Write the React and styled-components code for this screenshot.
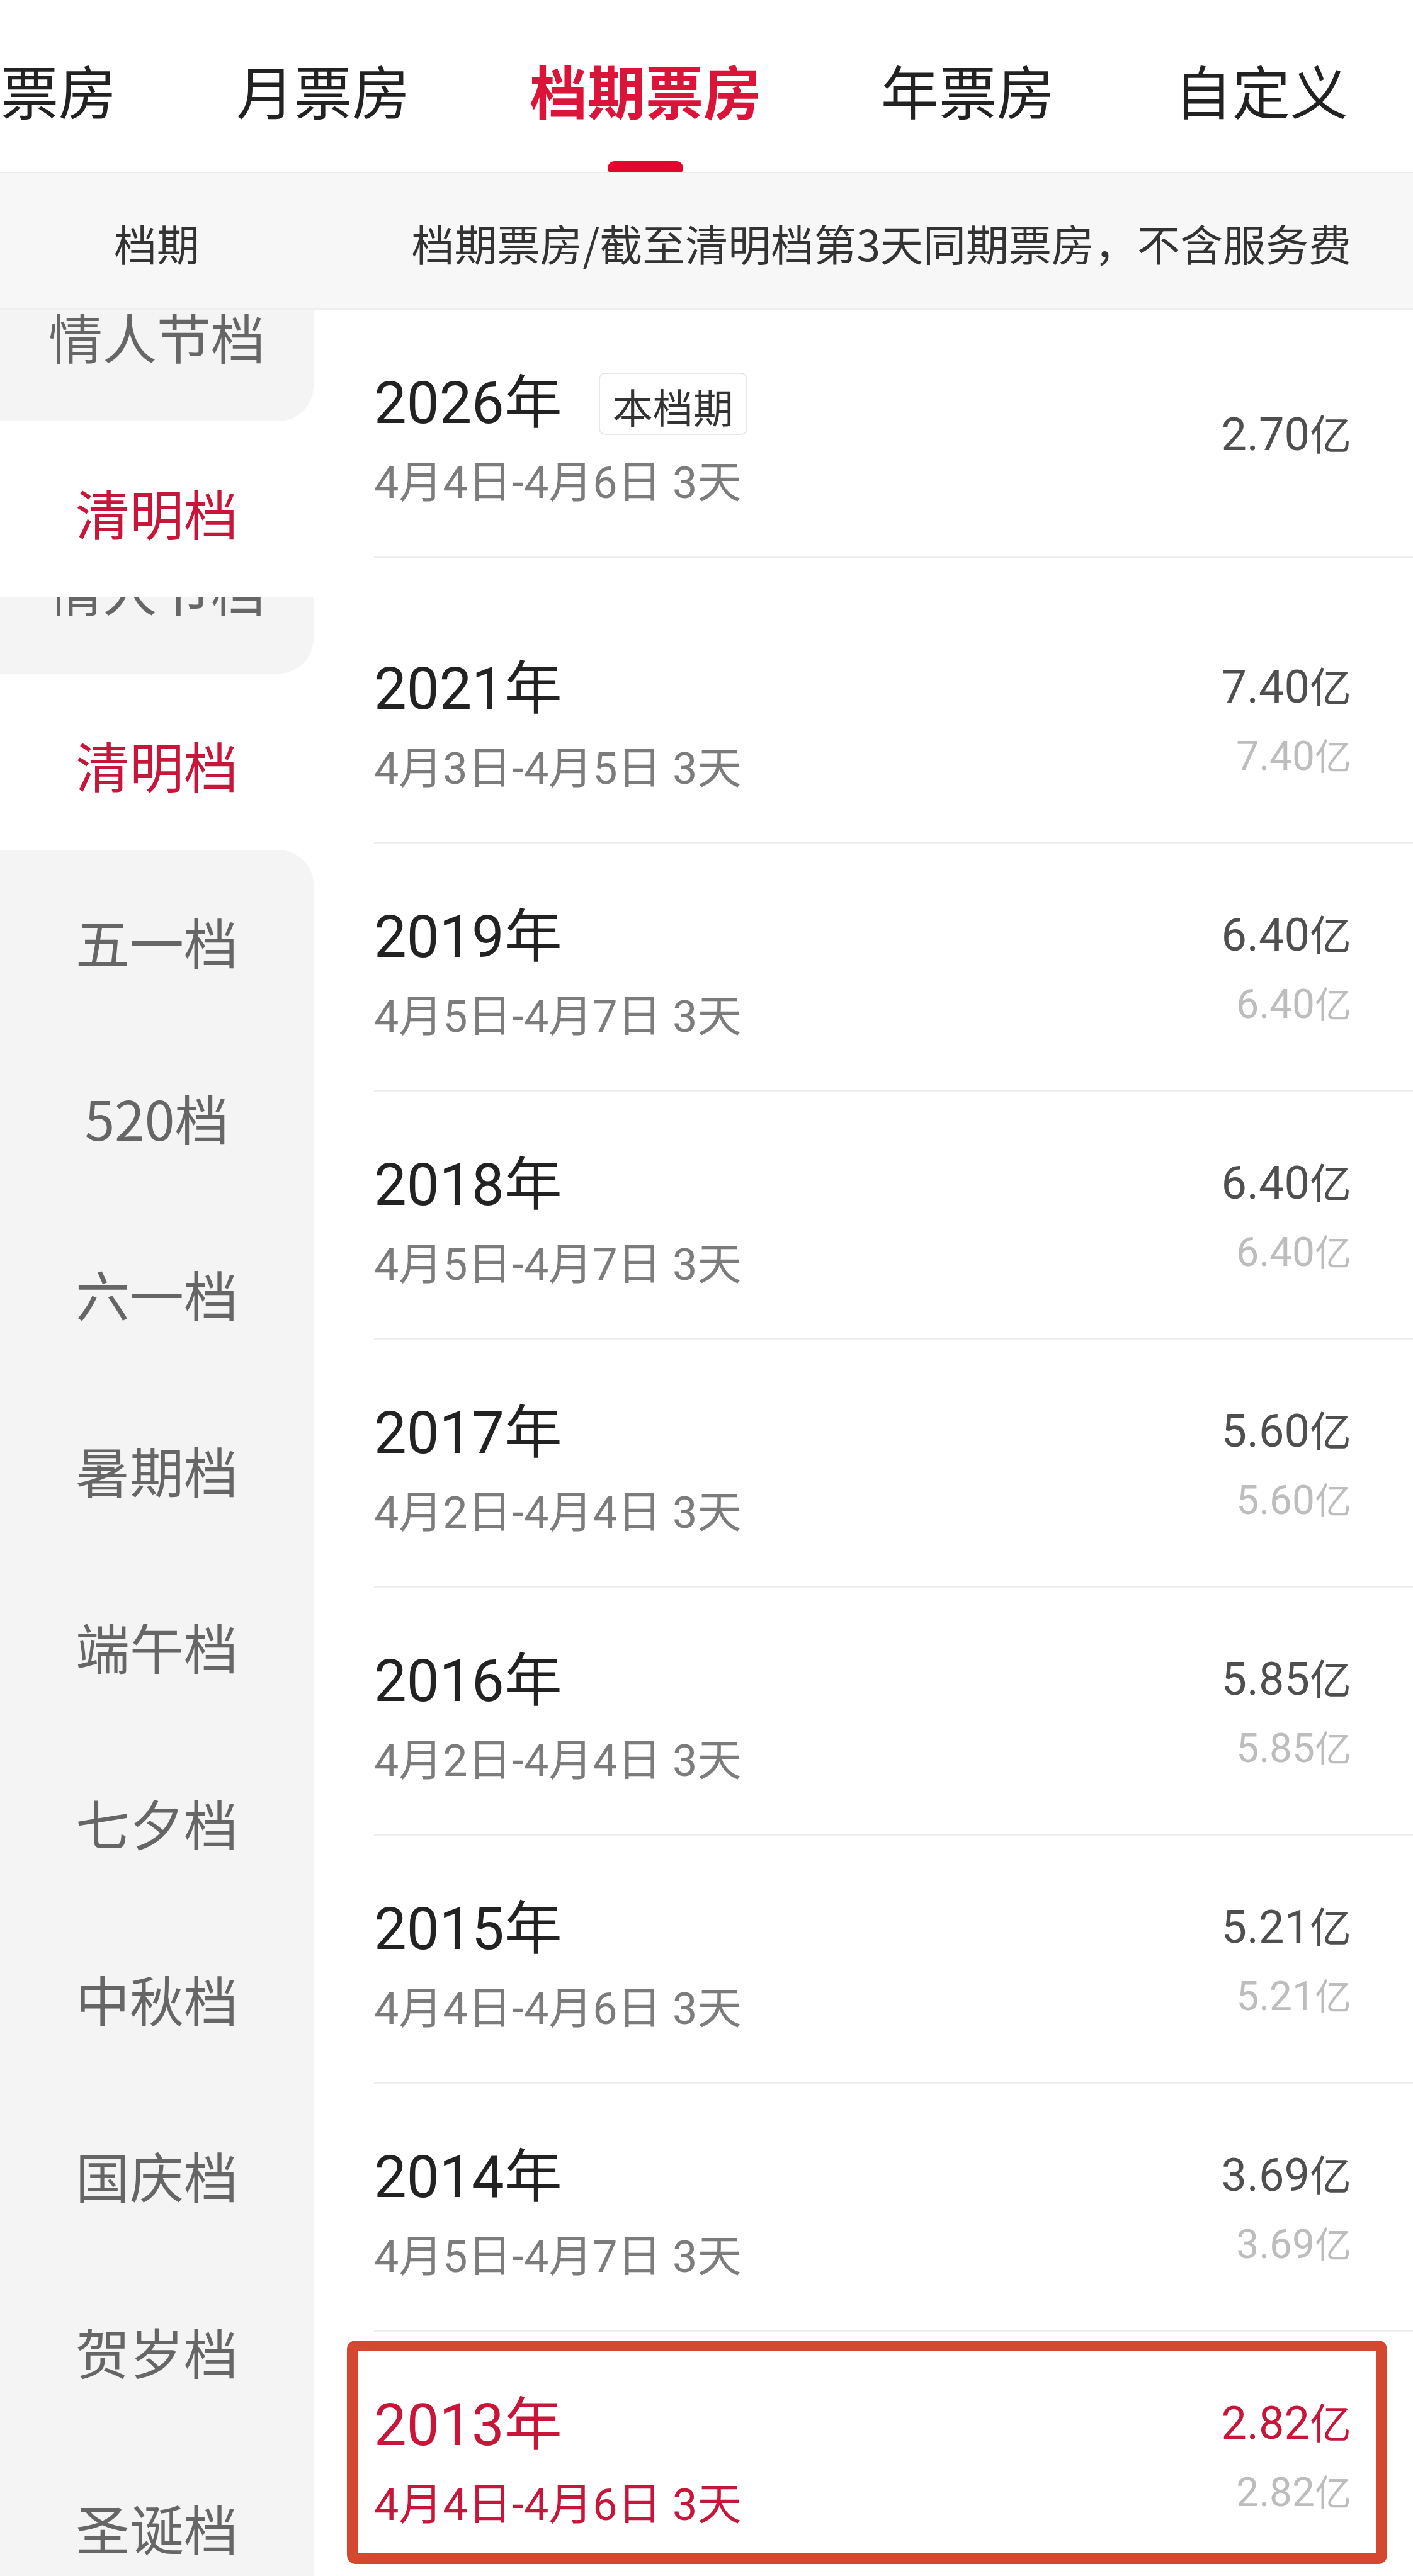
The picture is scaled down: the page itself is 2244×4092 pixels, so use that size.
import React from 'react';
import styled, { createGlobalStyle } from 'styled-components';

const GlobalStyle = createGlobalStyle`
  body {
    margin: 0;
    background: #fff;
    font-family: "Noto Sans CJK SC", sans-serif;
  }
`;

const RED = '#c8163a';

const Page = styled.div`
  width: 2244px;
  height: 4092px;
  overflow: hidden;
  background: #fff;
  display: flex;
  flex-direction: column;
`;

// tab strip, scrolled a little to the left
const TabBar = styled.div`
  box-sizing: border-box;
  height: 275px;
  border-bottom: 2px solid #eeeeee;
  overflow: hidden;
  flex-shrink: 0;
`;

const TabStrip = styled.div`
  display: flex;
  gap: 190px;
  height: 100%;
  margin-left: -91px;
`;

const Tab = styled.div`
  position: relative;
  display: flex;
  align-items: center;
  padding-top: 10px;
  box-sizing: border-box;
  height: 100%;
  flex-shrink: 0;
  font-size: 92px;
  line-height: 1;
  white-space: nowrap;
  color: ${(p) => (p.$active ? '#dc1439' : '#222')};
  font-weight: ${(p) => (p.$active ? 700 : 400)};

  &::after {
    content: '';
    display: ${(p) => (p.$active ? 'block' : 'none')};
    position: absolute;
    left: 50%;
    bottom: -5px;
    transform: translateX(-50%);
    width: 120px;
    height: 22px;
    border-radius: 11px;
    background: #e4062e;
  }
`;

const Header = styled.div`
  box-sizing: border-box;
  height: 217px;
  flex-shrink: 0;
  background: #f7f7f7;
  border-bottom: 2px solid #eeeeee;
  display: grid;
  grid-template-columns: 498px 1fr;
  align-items: center;
  font-size: 68px;
  line-height: 1;
  color: #333;
`;

const HeaderCell = styled.div`
  text-align: ${(p) => p.$align || 'center'};
  padding-right: ${(p) => p.$pr || 0}px;
  padding-top: 6px;
  white-space: nowrap;
`;

const Body = styled.div`
  flex: 1;
  display: flex;
  min-height: 0;
`;

const Sidebar = styled.div`
  width: 498px;
  flex-shrink: 0;
  overflow: hidden;
  background: #fff;
`;

const SideScroll = styled.div`
  margin-top: -103px;
  display: flex;
  flex-direction: column;
`;

const SideItem = styled.div`
  height: 280px;
  flex-shrink: 0;
  display: flex;
  align-items: center;
  justify-content: center;
  box-sizing: border-box;
  padding-top: 10px;
  font-size: 86px;
  line-height: 1;
  background: ${(p) => (p.$active ? '#fff' : '#f4f4f4')};
  color: ${(p) => (p.$active ? RED : '#666')};
  border-top-right-radius: ${(p) => (p.$round === 'top' ? '56px' : '0')};
  border-bottom-right-radius: ${(p) => (p.$round === 'bottom' ? '56px' : '0')};
`;

// the place where two screenshots were stitched together
const Seam = styled.div`
  height: 121px;
  flex-shrink: 0;
  overflow: hidden;

  & > div {
    margin-top: -159px;
  }
`;

const List = styled.div`
  flex: 1;
  display: flex;
  flex-direction: column;
`;

const Row = styled.div`
  position: relative;
  box-sizing: border-box;
  height: ${(p) => p.$h || 394}px;
  flex-shrink: 0;
  margin-left: 96px;
  padding-right: 98px;
  padding-top: ${(p) => p.$pt || 0}px;
  border-bottom: 2px solid #efefef;
  display: flex;
  align-items: center;
  justify-content: space-between;
`;

const Info = styled.div`
  display: flex;
  flex-direction: column;
  gap: 30px;
  margin-top: 20px;
`;

const YearLine = styled.div`
  display: flex;
  align-items: center;
  height: 108px;
`;

const Year = styled.div`
  font-family: Roboto, "Noto Sans CJK SC", sans-serif;
  font-size: 92px;
  line-height: 108px;
  color: ${(p) => (p.$hl ? RED : '#222')};
`;

const Tag = styled.div`
  margin-left: 58px;
  box-sizing: border-box;
  height: 99px;
  padding: 6px 20px 0;
  display: flex;
  align-items: center;
  border: 2px solid #e6e6e6;
  border-radius: 10px;
  font-size: 64px;
  line-height: 1;
  color: #333;
`;

const Dates = styled.div`
  font-family: Roboto, "Noto Sans CJK SC", sans-serif;
  font-size: 70px;
  line-height: 84px;
  white-space: nowrap;
  color: ${(p) => (p.$hl ? RED : '#7c7c7c')};
`;

const Amounts = styled.div`
  display: flex;
  flex-direction: column;
  align-items: flex-end;
  gap: 25px;
`;

const Amount = styled.div`
  font-family: Roboto, "Noto Sans CJK SC", sans-serif;
  font-size: ${(p) => (p.$sub ? 64 : 72)}px;
  line-height: ${(p) => (p.$sub ? 76 : 86)}px;
  color: ${(p) => (p.$sub ? '#bdbdbd' : p.$hl ? RED : '#4f4f4f')};
  white-space: nowrap;
`;

const Unit = styled.span`
  font-family: "Noto Sans CJK SC", sans-serif;
  font-size: ${(p) => (p.$sub ? 58 : 66)}px;
`;

const Marker = styled.div`
  position: absolute;
  left: -43px;
  right: 41px;
  top: 14px;
  height: 355px;
  box-sizing: border-box;
  border: 17px solid #d4482f;
  border-radius: 14px;
  pointer-events: none;
`;

const tabs = ['日票房', '月票房', '档期票房', '年票房', '自定义'];

const rest = ['520档', '六一档', '暑期档', '端午档', '七夕档', '中秋档', '国庆档', '贺岁档', '圣诞档'];

const rows = [
  { year: '2026年', dates: '4月4日-4月6日 3天', total: '2.70', tag: '本档期' },
  { year: '2021年', dates: '4月3日-4月5日 3天', total: '7.40', same: '7.40', h: 454, pt: 59 },
  { year: '2019年', dates: '4月5日-4月7日 3天', total: '6.40', same: '6.40' },
  { year: '2018年', dates: '4月5日-4月7日 3天', total: '6.40', same: '6.40' },
  { year: '2017年', dates: '4月2日-4月4日 3天', total: '5.60', same: '5.60' },
  { year: '2016年', dates: '4月2日-4月4日 3天', total: '5.85', same: '5.85' },
  { year: '2015年', dates: '4月4日-4月6日 3天', total: '5.21', same: '5.21' },
  { year: '2014年', dates: '4月5日-4月7日 3天', total: '3.69', same: '3.69' },
  { year: '2013年', dates: '4月4日-4月6日 3天', total: '2.82', same: '2.82', hl: true },
];

function App() {
  return (
    <>
      <GlobalStyle />
      <Page>
        <TabBar>
          <TabStrip>
            {tabs.map((t, i) => (
              <Tab key={t} $active={i === 2}>{t}</Tab>
            ))}
          </TabStrip>
        </TabBar>

        <Header>
          <HeaderCell>档期</HeaderCell>
          <HeaderCell $align="right" $pr={98}>档期票房/截至清明档第3天同期票房，不含服务费</HeaderCell>
        </Header>

        <Body>
          <Sidebar>
            <SideScroll>
              <SideItem $round="bottom">情人节档</SideItem>
              <SideItem $active>清明档</SideItem>
              <Seam>
                <SideItem $round="bottom">情人节档</SideItem>
              </Seam>
              <SideItem $active>清明档</SideItem>
              <SideItem $round="top">五一档</SideItem>
              {rest.map((s) => (
                <SideItem key={s}>{s}</SideItem>
              ))}
            </SideScroll>
          </Sidebar>

          <List>
            {rows.map((r) => (
              <Row key={r.year} $h={r.h} $pt={r.pt}>
                <Info>
                  <YearLine>
                    <Year $hl={r.hl}>{r.year}</Year>
                    {r.tag && <Tag>{r.tag}</Tag>}
                  </YearLine>
                  <Dates $hl={r.hl}>{r.dates}</Dates>
                </Info>
                <Amounts>
                  <Amount $hl={r.hl}>
                    {r.total}<Unit>亿</Unit>
                  </Amount>
                  {r.same && (
                    <Amount $sub>
                      {r.same}<Unit $sub>亿</Unit>
                    </Amount>
                  )}
                </Amounts>
                {r.hl && <Marker />}
              </Row>
            ))}
          </List>
        </Body>
      </Page>
    </>
  );
}

export default App;
